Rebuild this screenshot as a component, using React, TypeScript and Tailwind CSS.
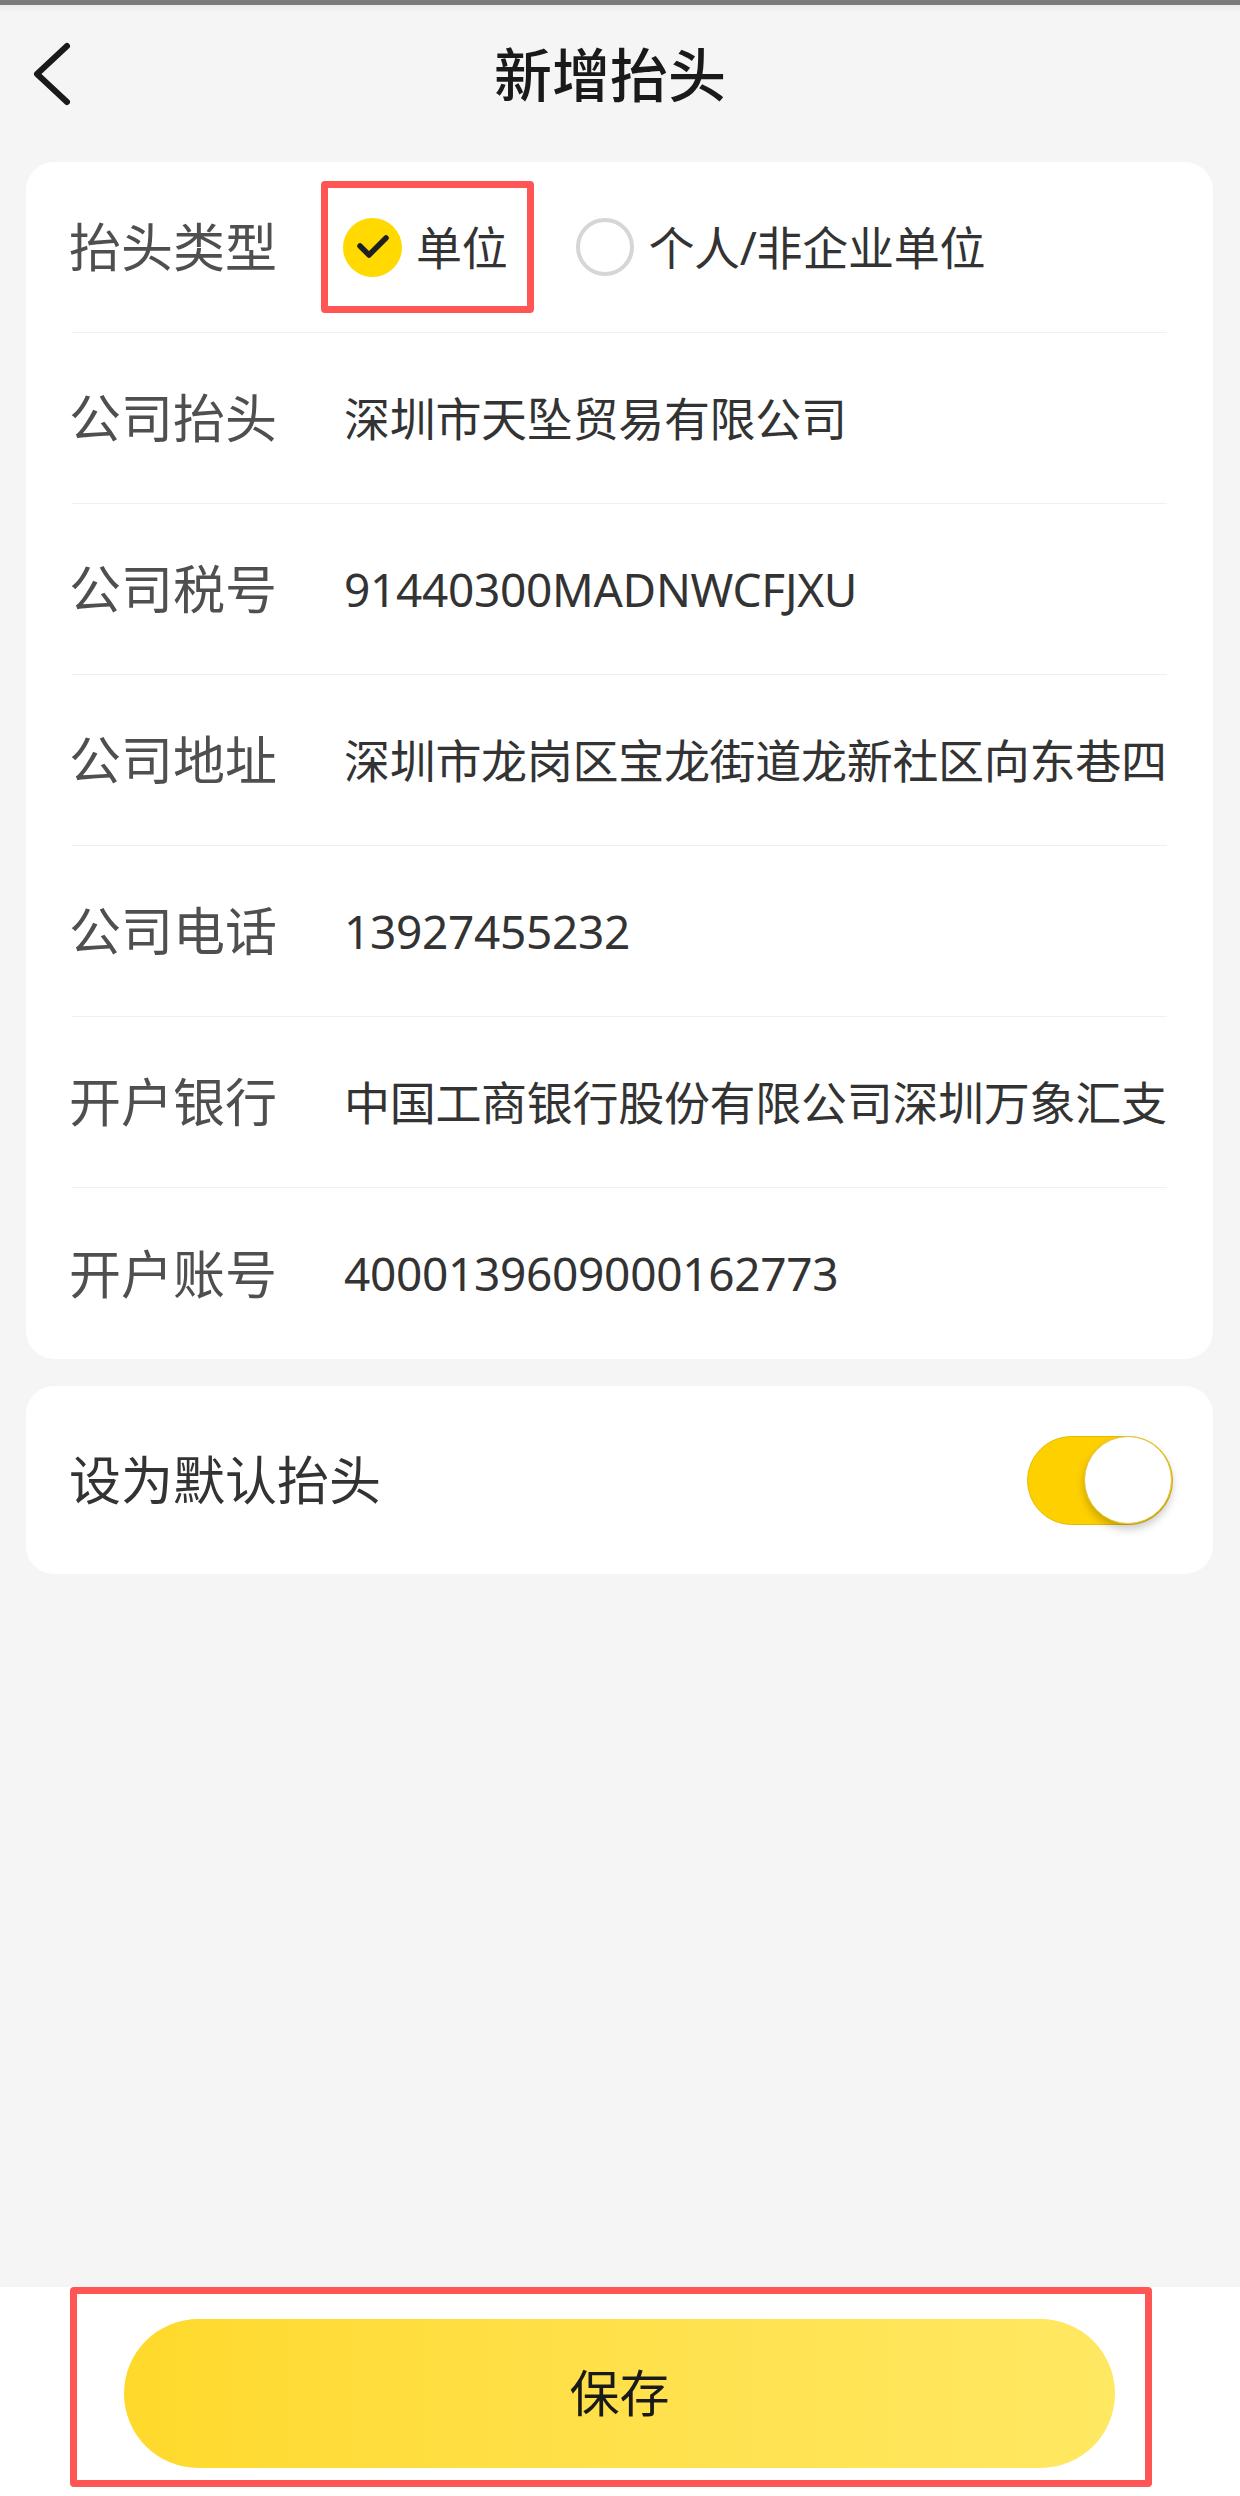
import React from 'react';

const fields = [
  { label: '公司抬头', value: '深圳市天坠贸易有限公司' },
  { label: '公司税号', value: '91440300MADNWCFJXU' },
  { label: '公司地址', value: '深圳市龙岗区宝龙街道龙新社区向东巷四' },
  { label: '公司电话', value: '13927455232' },
  { label: '开户银行', value: '中国工商银行股份有限公司深圳万象汇支' },
  { label: '开户账号', value: '4000139609000162773' },
];

function BackIcon() {
  return (
    <svg width="44" height="68" viewBox="0 0 44 68" fill="none">
      <path
        d="M35 6 L5 34 L35 62"
        stroke="#1a1a1a"
        strokeWidth="6"
        strokeLinecap="round"
        strokeLinejoin="round"
      />
    </svg>
  );
}

function Row({
  label,
  children,
  last,
}: {
  label: string;
  children: React.ReactNode;
  last?: boolean;
}) {
  return (
    <div
      className={`mx-[46px] h-[171px] flex items-center ${
        last ? '' : 'border-b border-[#f0f0f0]'
      }`}
    >
      <div className="w-[275px] shrink-0 -ml-[3px] text-[52px] text-[#4f4f4f]">
        {label}
      </div>
      <div className="flex-1 min-w-0 whitespace-nowrap text-[46px] tracking-[-0.3px] text-[#333333]">
        {children}
      </div>
    </div>
  );
}

export default function App() {
  return (
    <div
      className="w-[1240px] h-[2496px] bg-[#f5f5f5] flex flex-col"
      style={{ fontFamily: '"Noto Sans", "Noto Sans CJK SC", sans-serif' }}
    >
      <div className="h-[5px] bg-[#7a7a7a]" />
      <div className="h-[8px] bg-gradient-to-b from-[#ebebeb] to-[#f5f5f5]" />

      {/* header */}
      <div className="h-[122px] flex items-center">
        <div className="w-[160px] pl-[32px] flex items-center">
          <BackIcon />
        </div>
        <div className="flex-1 text-center text-[58px] font-medium text-[#1a1a1a] pr-[20px]">
          新增抬头
        </div>
        <div className="w-[160px]" />
      </div>

      <div className="flex-1 flex flex-col">
        {/* invoice title card */}
        <div className="mt-[27px] ml-[26px] mr-[27px] bg-white rounded-[28px]">
          <Row label="抬头类型">
            <div className="flex items-center -ml-[23px]">
              <div className="h-[132px] border-[7px] border-[#ff5555] rounded-[4px] flex items-center pl-[15px] pr-[20px]">
                <div className="w-[59px] h-[59px] rounded-full bg-[#ffd900] flex items-center justify-center">
                  <svg width="34" height="26" viewBox="0 0 34 26" fill="none">
                    <path
                      d="M4 12 L13 21 L30 4"
                      stroke="#1f1f1f"
                      strokeWidth="5.5"
                      strokeLinecap="round"
                      strokeLinejoin="round"
                    />
                  </svg>
                </div>
                <span className="ml-[14px] text-[46px] text-[#333333]">单位</span>
              </div>
              <div className="ml-[42px] flex items-center">
                <div className="w-[58px] h-[58px] rounded-full border-[4px] border-[#d6d6d6]" />
                <span className="ml-[14px] text-[46px] text-[#333333]">
                  个人/非企业单位
                </span>
              </div>
            </div>
          </Row>
          {fields.map((f, i) => (
            <Row key={f.label} label={f.label} last={i === fields.length - 1}>
              {f.value}
            </Row>
          ))}
        </div>

        {/* default switch card */}
        <div className="mt-[27px] ml-[26px] mr-[27px] h-[188px] bg-white rounded-[28px] flex items-center justify-between pl-[43px] pr-[40px]">
          <span className="text-[52px] text-[#333333]">设为默认抬头</span>
          <div className="w-[146px] h-[89px] rounded-full bg-[#ffd000] border border-[#e3bc00] flex items-center justify-end">
            <div className="w-[88px] h-[88px] rounded-full bg-white border-[1.5px] border-[#e6c53c] shadow-[0_5px_8px_rgba(0,0,0,0.22)]" />
          </div>
        </div>
      </div>

      {/* bottom bar */}
      <div className="h-[209px] bg-white pl-[70px]">
        <div className="w-[1082px] h-[200px] border-[7px] border-[#ff5555] rounded-[4px] pl-[47px] pt-[25px]">
          <button className="w-[991px] h-[149px] rounded-full bg-gradient-to-r from-[#ffd92a] to-[#ffe862] text-[50px] text-[#1a1a1a] flex items-center justify-center">
            保存
          </button>
        </div>
      </div>
    </div>
  );
}
